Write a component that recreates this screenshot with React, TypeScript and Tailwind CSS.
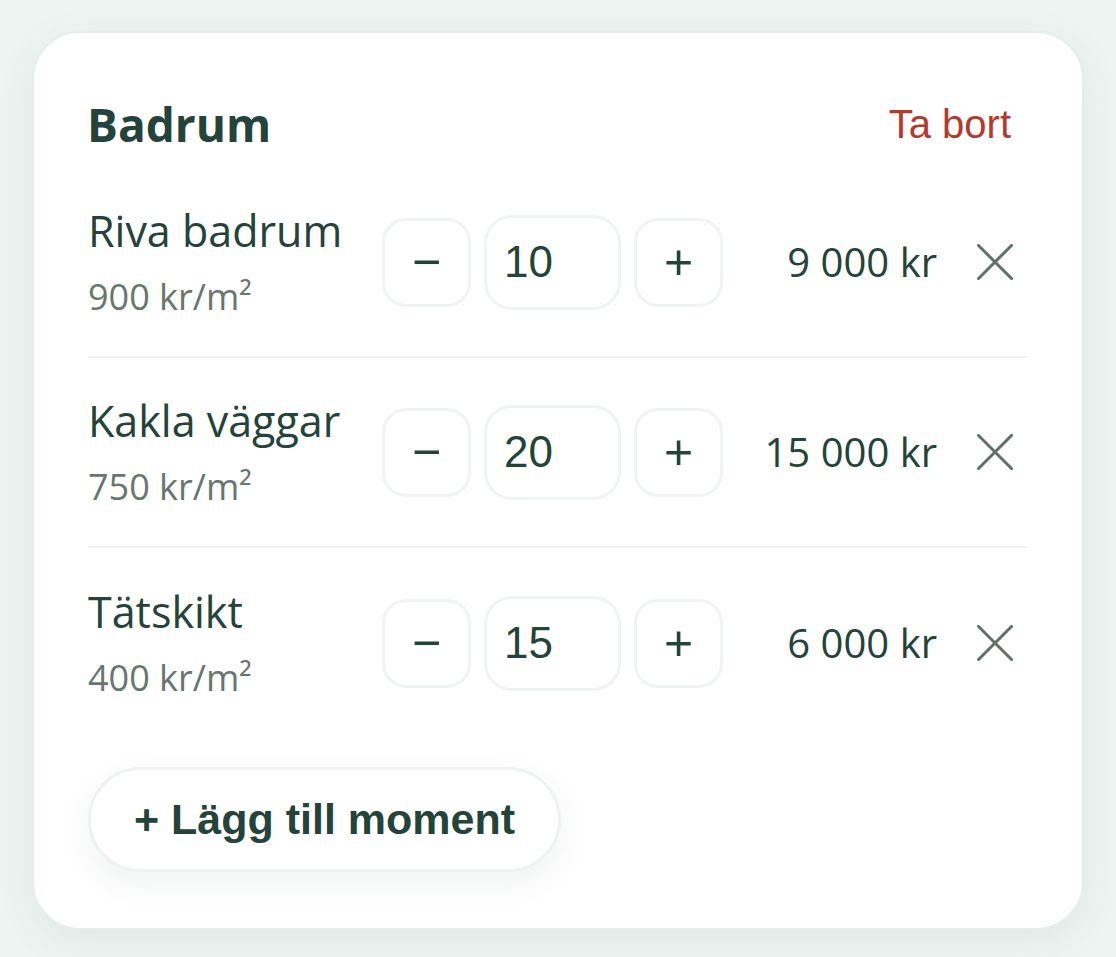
import { useState } from "react";

type Item = {
  id: number;
  name: string;
  price: number;
  qty: number;
};

const initialItems: Item[] = [
  { id: 1, name: "Riva badrum", price: 900, qty: 10 },
  { id: 2, name: "Kakla väggar", price: 750, qty: 20 },
  { id: 3, name: "Tätskikt", price: 400, qty: 15 },
];

function formatKr(n: number) {
  return n.toString().replace(/\B(?=(\d{3})+(?!\d))/g, " ") + " kr";
}

function CloseIcon() {
  return (
    <svg width="36" height="36" viewBox="0 0 36 36" fill="none">
      <path
        d="M1.5 1.5L34.5 34.5M34.5 1.5L1.5 34.5"
        stroke="#5f7168"
        strokeWidth="3"
        strokeLinecap="square"
      />
    </svg>
  );
}

export default function App() {
  const [items, setItems] = useState<Item[]>(initialItems);

  const changeQty = (id: number, delta: number) => {
    setItems((prev) =>
      prev.map((it) =>
        it.id === id ? { ...it, qty: Math.max(0, it.qty + delta) } : it
      )
    );
  };

  return (
    <div className="min-h-screen bg-[#eef4f2] pt-[31px] px-[32px] font-['Open_Sans',sans-serif] text-[#24433a]">
      <div className="w-[1052px] h-[899px] rounded-[48px] bg-white border-2 border-[#e6eeeb] shadow-[0_10px_40px_rgba(40,70,60,0.07)] px-[54px] pt-[55px]">
        {/* Header */}
        <div className="flex items-center justify-between h-[72px]">
          <h2 className="text-[46px] font-bold leading-none -ml-[1px]">Badrum</h2>
          <button className="mr-[17px] text-[40px] text-[#b3392c] font-['Liberation_Sans',Arial,sans-serif]">
            Ta bort
          </button>
        </div>

        {/* Rows */}
        <div className="mt-[8px]">
          {items.map((it, i) => (
            <div
              key={it.id}
              className={`flex items-center h-[190px] ${
                i < items.length - 1 ? "border-b-2 border-[#eef3f1]" : ""
              }`}
            >
              <div className="w-[294px] flex flex-col">
                <span className="text-[43px] leading-[52px]">{it.name}</span>
                <span className="mt-[18px] text-[36px] leading-[44px] text-[#67776f]">
                  {it.price} kr/m²
                </span>
              </div>

              <div className="flex items-center gap-[13px] font-['Liberation_Sans',Arial,sans-serif]">
                <button
                  onClick={() => changeQty(it.id, -1)}
                  className="w-[89px] h-[89px] rounded-[24px] border-[3px] border-[#f0f4f3] bg-white text-[50px] leading-none flex items-center justify-center"
                >
                  −
                </button>
                <div className="w-[137px] h-[95px] rounded-[28px] border-[3px] border-[#f0f4f3] bg-white flex items-center pl-[17px] text-[44px]">
                  {it.qty}
                </div>
                <button
                  onClick={() => changeQty(it.id, 1)}
                  className="w-[89px] h-[89px] rounded-[24px] border-[3px] border-[#f0f4f3] bg-white text-[50px] leading-none flex items-center justify-center"
                >
                  +
                </button>
              </div>

              <div className="flex-1 text-right text-[40px] pr-[2px]">
                {formatKr(it.price * it.qty)}
              </div>

              <button className="ml-[38px] mr-[15px] flex items-center justify-center">
                <CloseIcon />
              </button>
            </div>
          ))}
        </div>

        {/* Add */}
        <button className="mt-[29px] h-[105px] px-[43px] rounded-full border-[3px] border-[#eef3f1] bg-white shadow-[0_12px_32px_rgba(40,70,60,0.07)] text-[43px] font-bold font-['Liberation_Sans',Arial,sans-serif]">
          + Lägg till moment
        </button>
      </div>
    </div>
  );
}
